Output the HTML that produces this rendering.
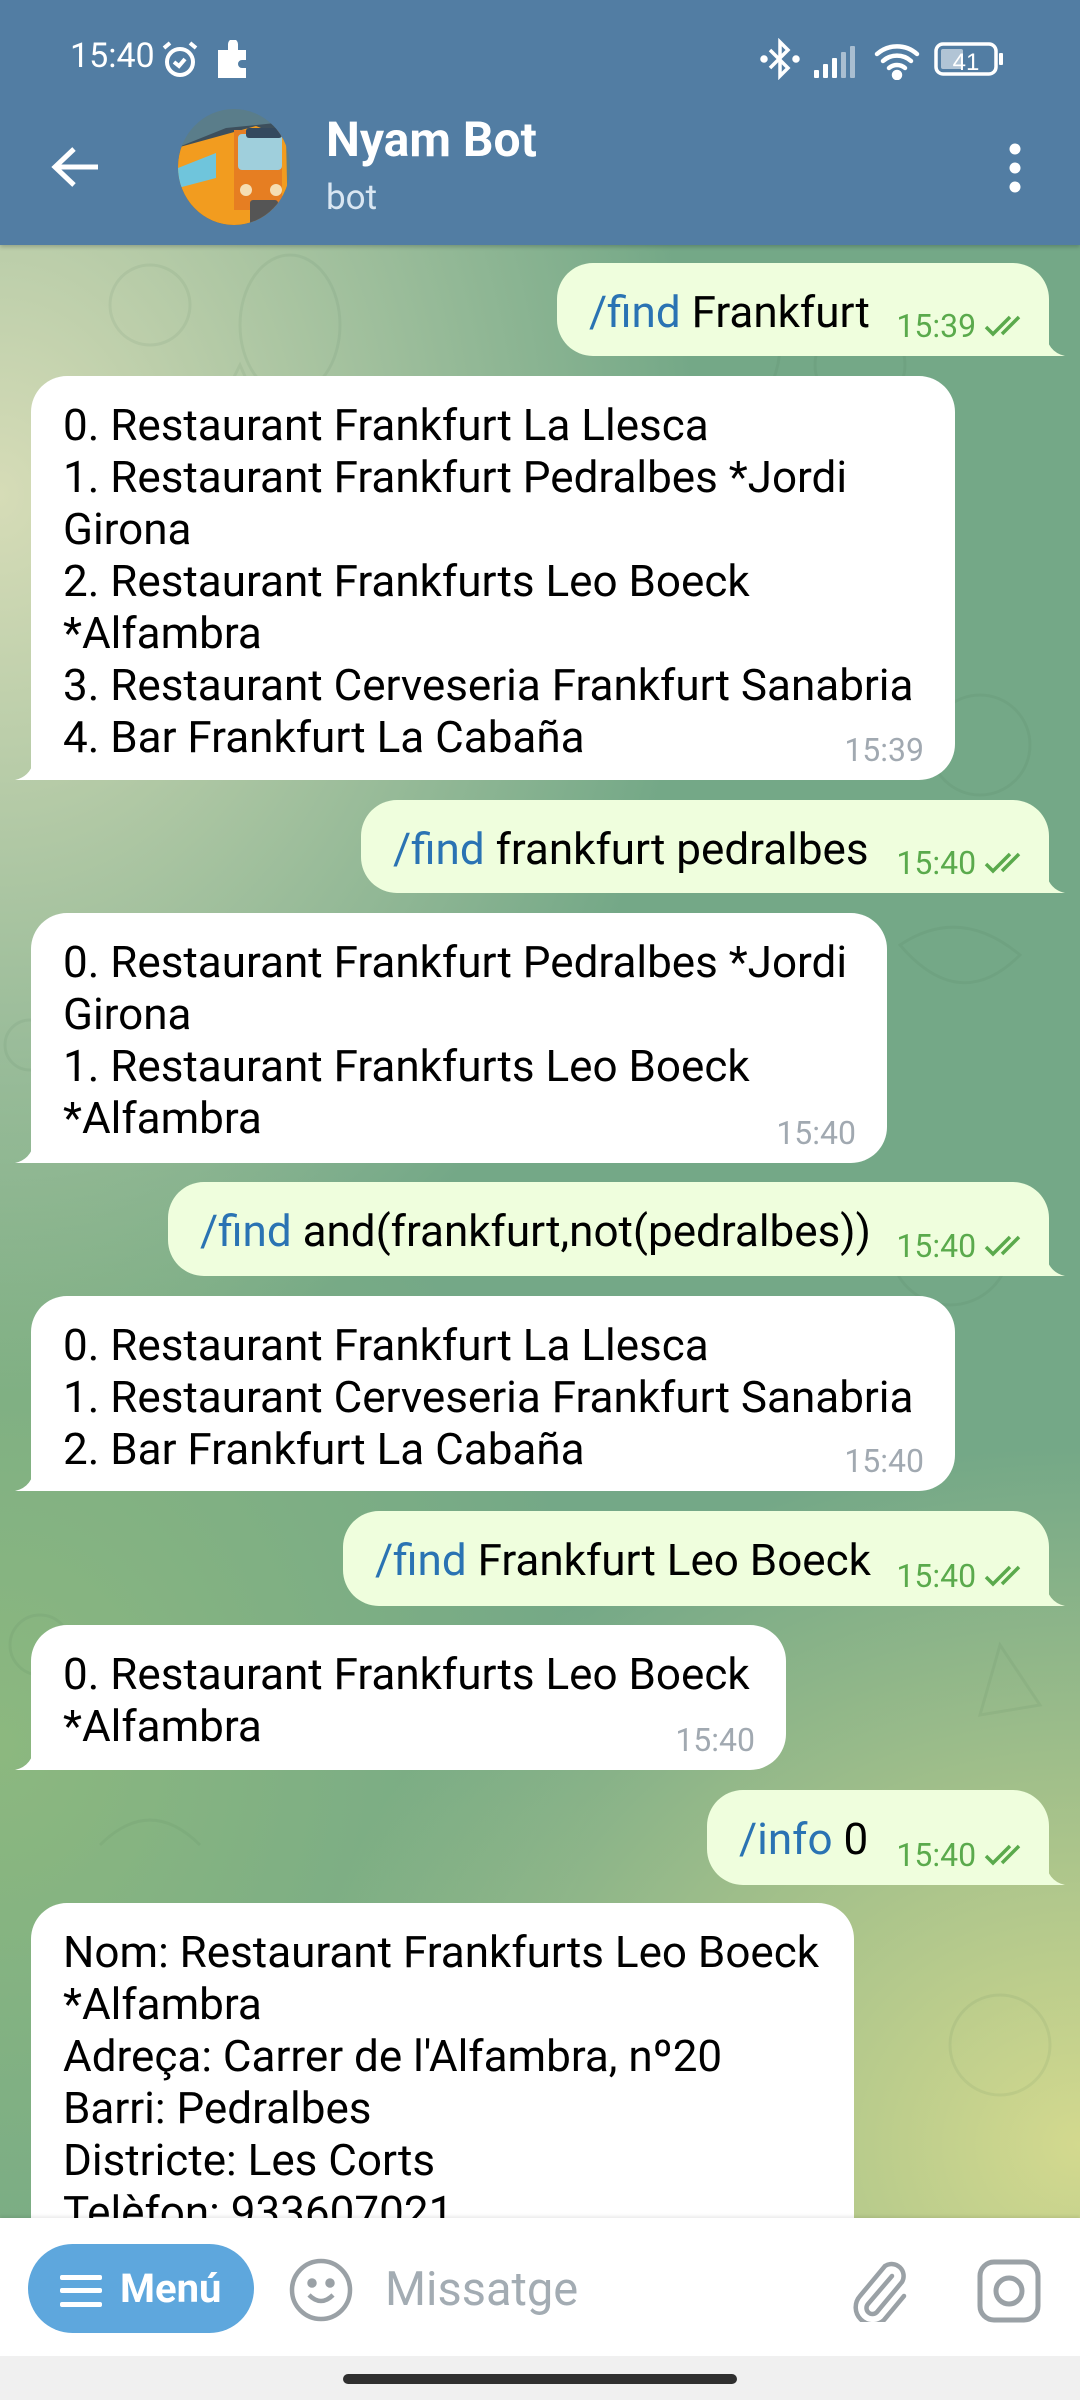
<!DOCTYPE html>
<html><head><meta charset="utf-8">
<style>
*{margin:0;padding:0;box-sizing:border-box}
body{width:1080px;height:2400px;overflow:hidden;position:relative;font-family:"Roboto","Liberation Sans",sans-serif;}
.bg{position:absolute;left:0;top:245px;width:1080px;height:1975px;
background:
radial-gradient(ellipse 700px 900px at 0px 250px,#d6dcb7 0%,rgba(214,220,183,0) 100%),
radial-gradient(ellipse 800px 700px at 1080px 1900px,#d3d98e 0%,rgba(211,217,142,0) 100%),
radial-gradient(ellipse 600px 700px at 0px 1500px,#8cb87f 0%,rgba(140,184,127,0) 100%),
#74a887;}
.header{position:absolute;left:0;top:0;width:1080px;height:245px;background:#527da3;box-shadow:0 2px 4px rgba(0,0,0,.2);z-index:2}
.st{position:absolute;color:#fff;font-size:33px;top:38px}
.b{position:absolute;font-size:44px;line-height:52px;color:#000;padding:23px 0 0 32px;white-space:nowrap}
.in{background:#fff;border-radius:36px 36px 36px 0}
.out{background:#effedd;border-radius:36px 36px 0 36px}
.cmd{color:#2a73b3}
.t{position:absolute;font-size:32px;bottom:14px;line-height:32px}
.in .t{color:#a1a9b1;right:31px}
.out .t{color:#5aaa4c;right:19px}
.tail{position:absolute;bottom:0;width:20px;height:26px}
.in .tail{left:-16px}
.out .tail{right:-16px}
.bottom{position:absolute;left:0;top:2218px;width:1080px;height:138px;background:#fff;box-shadow:0 -2px 3px rgba(0,0,0,.08);z-index:2}
.nav{position:absolute;left:0;top:2356px;width:1080px;height:44px;background:#f0f0f0;z-index:2}
</style></head><body>
<div class="bg">
<svg width="1080" height="1975" style="position:absolute;left:0;top:0;opacity:.08" fill="none" stroke="#3f6a4a" stroke-width="3">
<circle cx="150" cy="60" r="40"/><ellipse cx="290" cy="80" rx="50" ry="70"/><path d="M200 200 l40 -80 l40 90 z"/>
<circle cx="860" cy="120" r="45"/><path d="M760 40 q40 60 0 120"/><circle cx="980" cy="500" r="50"/>
<path d="M900 700 q60 -40 120 10 q-60 60 -120 -10z"/><circle cx="950" cy="1000" r="60"/><path d="M1000 1400 l40 60 l-60 10z"/>
<circle cx="40" cy="1400" r="30"/><path d="M100 1600 q50 -50 100 0"/><circle cx="260" cy="1800" r="40"/><path d="M700 1750 l40 -80 l40 80z"/>
<circle cx="1000" cy="1800" r="50"/><path d="M400 1830 q60 -50 120 0"/><circle cx="30" cy="800" r="25"/><path d="M960 1600 q40 -30 80 0 q-40 40 -80 0z"/>
</svg>
</div>

<div class="header">
  <div class="st" style="left:70px;top:36px;font-size:34px">15:40</div>
  <svg style="position:absolute;left:160px;top:40px" width="40" height="40" viewBox="0 0 40 40" fill="none" stroke="#fff" stroke-width="4"><circle cx="20" cy="22" r="13"/><path d="M14 22l5 4 6-7M4 8l6-5M36 8l-6-5"/></svg>
  <svg style="position:absolute;left:214px;top:40px" width="36" height="38" viewBox="0 0 36 38" fill="#fff"><path d="M4 10h10v-6a5 5 0 0 1 10 0v6h8v10h-4a4 4 0 0 0 0 8h4v10h-28z"/></svg>
  <svg style="position:absolute;left:760px;top:38px" width="40" height="42" viewBox="0 0 40 42" fill="none" stroke="#fff" stroke-width="3.5"><path d="M10 12l18 18-8 8v-34l8 8-18 18"/><circle cx="4" cy="21" r="2" fill="#fff"/><circle cx="36" cy="21" r="2" fill="#fff"/></svg>
  <svg style="position:absolute;left:812px;top:44px" width="46" height="34" viewBox="0 0 46 34" fill="#fff"><rect x="2" y="26" width="5" height="8" rx="1"/><rect x="11" y="20" width="5" height="14" rx="1"/><rect x="20" y="14" width="5" height="20" rx="1"/><rect x="29" y="8" width="5" height="26" rx="1" opacity=".5"/><rect x="38" y="2" width="5" height="32" rx="1" opacity=".5"/></svg>
  <svg style="position:absolute;left:874px;top:42px" width="48" height="38" viewBox="0 0 48 38" fill="none" stroke="#fff" stroke-width="4.5" stroke-linecap="round"><path d="M3 12a30 30 0 0 1 40 0M9 19a21 21 0 0 1 28 0M15 26a12 12 0 0 1 16 0"/><circle cx="23" cy="33" r="3" fill="#fff"/></svg>
  <svg style="position:absolute;left:934px;top:42px" width="72" height="36" viewBox="0 0 72 36"><rect x="2" y="2" width="60" height="30" rx="7" fill="none" stroke="#fff" stroke-width="3.5"/><rect x="7" y="7" width="22" height="20" rx="2" fill="#fff" opacity=".55"/><rect x="65" y="11" width="4" height="12" rx="1" fill="#fff"/><text x="32" y="28" font-size="24" fill="#fff" text-anchor="middle" font-family="Liberation Sans">41</text></svg>

  <svg style="position:absolute;left:50px;top:145px" width="52" height="44" viewBox="0 0 52 44" fill="none" stroke="#fff" stroke-width="5"><path d="M48 22H6M24 4L5 22l19 18"/></svg>
  <svg style="position:absolute;left:176px;top:108px" width="116" height="118" viewBox="0 0 116 118">
    <defs><clipPath id="c"><ellipse cx="58" cy="59" rx="56" ry="58"/></clipPath></defs>
    <g clip-path="url(#c)">
      <rect width="116" height="118" fill="#5a7d8a"/>
      <path d="M0 40 L50 20 L100 15 L116 118 L0 118z" fill="#3d4f5c"/>
      <path d="M0 40 L80 18 L110 30 L112 118 L40 118 L0 90z" fill="#f29c1f"/>
      <path d="M58 22 h48 v80 h-48z" fill="#e67e22"/>
      <rect x="62" y="26" width="44" height="36" rx="4" fill="#9fcfdc"/>
      <path d="M2 60 L40 45 L40 70 L2 80z" fill="#6fc5dc"/>
      <circle cx="70" cy="82" r="6" fill="#f5deb3"/><circle cx="100" cy="82" r="6" fill="#f5deb3"/>
      <rect x="74" y="92" width="28" height="26" rx="3" fill="#555"/>
      <rect x="70" y="20" width="36" height="10" rx="3" fill="#34495e"/>
    </g>
  </svg>
  <div style="position:absolute;left:326px;top:112px;color:#fff;font-size:48px;font-weight:bold;line-height:56px">Nyam Bot</div>
  <div style="position:absolute;left:326px;top:178px;color:#d9e6f2;font-size:35px;line-height:40px">bot</div>
  <svg style="position:absolute;left:1000px;top:143px" width="30" height="50" viewBox="0 0 30 50" fill="#fff"><circle cx="15" cy="6" r="5.5"/><circle cx="15" cy="25" r="5.5"/><circle cx="15" cy="44" r="5.5"/></svg>
</div>

<div class="b out" style="left:557px;top:263px;width:492px;height:93px"><span class="cmd">/find</span> Frankfurt<span class="t">15:39 <svg width="46" height="22" viewBox="0 0 46 22" fill="none" stroke="#5aaa4c" stroke-width="3.5"><path d="M2 12l7 7L26 2M18 19L35 2"/></svg></span><svg class="tail" viewBox="0 0 20 26"><path d="M0 0 Q2 22 20 26 H0z" fill="#effedd"/></svg></div>

<div class="b in" style="left:31px;top:376px;width:924px;height:404px">0. Restaurant Frankfurt La Llesca<br>1. Restaurant Frankfurt Pedralbes *Jordi<br>Girona<br>2. Restaurant Frankfurts Leo Boeck<br>*Alfambra<br>3. Restaurant Cerveseria Frankfurt Sanabria<br>4. Bar Frankfurt La Cabaña<span class="t">15:39</span><svg class="tail" viewBox="0 0 20 26"><path d="M20 0 Q18 22 0 26 H20z" fill="#fff"/></svg></div>

<div class="b out" style="left:361px;top:800px;width:688px;height:93px"><span class="cmd">/find</span> frankfurt pedralbes<span class="t">15:40 <svg width="46" height="22" viewBox="0 0 46 22" fill="none" stroke="#5aaa4c" stroke-width="3.5"><path d="M2 12l7 7L26 2M18 19L35 2"/></svg></span><svg class="tail" viewBox="0 0 20 26"><path d="M0 0 Q2 22 20 26 H0z" fill="#effedd"/></svg></div>

<div class="b in" style="left:31px;top:913px;width:856px;height:250px">0. Restaurant Frankfurt Pedralbes *Jordi<br>Girona<br>1. Restaurant Frankfurts Leo Boeck<br>*Alfambra<span class="t">15:40</span><svg class="tail" viewBox="0 0 20 26"><path d="M20 0 Q18 22 0 26 H20z" fill="#fff"/></svg></div>

<div class="b out" style="left:168px;top:1182px;width:881px;height:94px"><span class="cmd">/find</span> and(frankfurt,not(pedralbes))<span class="t">15:40 <svg width="46" height="22" viewBox="0 0 46 22" fill="none" stroke="#5aaa4c" stroke-width="3.5"><path d="M2 12l7 7L26 2M18 19L35 2"/></svg></span><svg class="tail" viewBox="0 0 20 26"><path d="M0 0 Q2 22 20 26 H0z" fill="#effedd"/></svg></div>

<div class="b in" style="left:31px;top:1296px;width:924px;height:195px">0. Restaurant Frankfurt La Llesca<br>1. Restaurant Cerveseria Frankfurt Sanabria<br>2. Bar Frankfurt La Cabaña<span class="t">15:40</span><svg class="tail" viewBox="0 0 20 26"><path d="M20 0 Q18 22 0 26 H20z" fill="#fff"/></svg></div>

<div class="b out" style="left:343px;top:1511px;width:706px;height:95px"><span class="cmd">/find</span> Frankfurt Leo Boeck<span class="t">15:40 <svg width="46" height="22" viewBox="0 0 46 22" fill="none" stroke="#5aaa4c" stroke-width="3.5"><path d="M2 12l7 7L26 2M18 19L35 2"/></svg></span><svg class="tail" viewBox="0 0 20 26"><path d="M0 0 Q2 22 20 26 H0z" fill="#effedd"/></svg></div>

<div class="b in" style="left:31px;top:1625px;width:755px;height:145px">0. Restaurant Frankfurts Leo Boeck<br>*Alfambra<span class="t">15:40</span><svg class="tail" viewBox="0 0 20 26"><path d="M20 0 Q18 22 0 26 H20z" fill="#fff"/></svg></div>

<div class="b out" style="left:707px;top:1790px;width:342px;height:95px"><span class="cmd">/info</span> 0<span class="t">15:40 <svg width="46" height="22" viewBox="0 0 46 22" fill="none" stroke="#5aaa4c" stroke-width="3.5"><path d="M2 12l7 7L26 2M18 19L35 2"/></svg></span><svg class="tail" viewBox="0 0 20 26"><path d="M0 0 Q2 22 20 26 H0z" fill="#effedd"/></svg></div>

<div class="b in" style="left:31px;top:1903px;width:823px;height:400px;border-radius:36px">Nom: Restaurant Frankfurts Leo Boeck<br>*Alfambra<br>Adreça: Carrer de l'Alfambra, nº20<br>Barri: Pedralbes<br>Districte: Les Corts<br>Telèfon: 933607021</div>

<div class="bottom">
  <div style="position:absolute;left:28px;top:26px;width:226px;height:89px;border-radius:45px;background:#5ea7dd;color:#fff;font-size:40px;font-weight:bold;line-height:89px;padding-left:92px">Menú</div>
  <svg style="position:absolute;left:58px;top:56px" width="46" height="34" viewBox="0 0 46 34" fill="#fff"><rect x="2" y="1" width="42" height="5" rx="2"/><rect x="2" y="14" width="42" height="5" rx="2"/><rect x="2" y="28" width="42" height="5" rx="2"/></svg>
  <svg style="position:absolute;left:288px;top:39px" width="66" height="66" viewBox="0 0 66 66" fill="none" stroke="#9aa1a6" stroke-width="4.5"><circle cx="33" cy="33" r="29"/><path d="M21 38q12 12 24 0"/><circle cx="24" cy="26" r="2.5" fill="#9aa1a6"/><circle cx="42" cy="26" r="2.5" fill="#9aa1a6"/></svg>
  <div style="position:absolute;left:385px;top:44px;color:#a3acb3;font-size:47px;line-height:56px">Missatge</div>
  <svg style="position:absolute;left:852px;top:38px" width="60" height="66" viewBox="0 0 60 66" fill="none" stroke="#9aa1a6" stroke-width="4.5" stroke-linecap="round"><path d="M40 20L16 48a6 6 0 0 0 9 8L50 26a12 12 0 0 0-17-16L8 40a17 17 0 0 0 24 24L52 40"/></svg>
  <svg style="position:absolute;left:976px;top:40px" width="66" height="66" viewBox="0 0 66 66" fill="none" stroke="#9aa1a6" stroke-width="5"><rect x="4" y="4" width="58" height="58" rx="14"/><circle cx="33" cy="33" r="13"/></svg>
</div>
<div class="nav"><div style="position:absolute;left:343px;top:18px;width:394px;height:10px;border-radius:5px;background:#2f2f2f"></div></div>
</body></html>
